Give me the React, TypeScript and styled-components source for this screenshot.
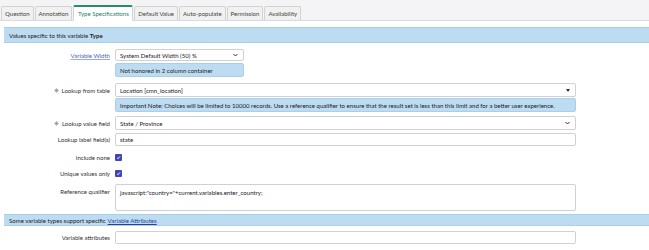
import React from "react";
import styled, { createGlobalStyle } from "styled-components";

const Global = createGlobalStyle`
  html, body { margin: 0; padding: 0; background: #fff; }
  body { font-family: Lato, "Open Sans", sans-serif; color: #2e2e2e; }
  * { box-sizing: border-box; }
`;

const Page = styled.div`
  width: 649px;
  height: 250px;
  overflow: hidden;
  font-size: 6.05px;
`;

const TabStrip = styled.div`
  display: flex;
  align-items: flex-end;
  height: 21px;
  padding: 0 0 0 1px;
  background: #f4f4f6;
  border-bottom: 1px solid #dadadd;
`;

const Tab = styled.div<{ $active?: boolean }>`
  height: ${(p) => (p.$active ? "16px" : "15px")};
  margin-bottom: -1px;
  padding: 0 ${(p) => (p.$active ? "3.5px" : "3px")};
  display: flex;
  align-items: center;
  background: ${(p) => (p.$active ? "#fff" : "#f1f1f2")};
  border: 1px solid #d3d3d6;
  border-top: ${(p) => (p.$active ? "2px solid #2a8a6c" : "1px solid #d3d3d6")};
  border-bottom: ${(p) => (p.$active ? "1px solid #fff" : "1px solid #dadadd")};
  border-radius: 2px 2px 0 0;
  margin-right: 1px;
  color: ${(p) => (p.$active ? "#2a7f69" : "#444")};
  white-space: nowrap;
`;

const Content = styled.div`
  padding: 6px 0 0 4px;
`;

const Banner = styled.div<{ $h: number; $mt?: number }>`
  height: ${(p) => p.$h}px;
  margin-top: ${(p) => p.$mt ?? 0}px;
  display: flex;
  align-items: center;
  padding-left: 5px;
  background: #bddcf1;
  border-top: 1px solid #aacfe8;
  border-bottom: 1px solid #aacfe8;
  color: #222;
  white-space: nowrap;
`;

const Row = styled.div<{ $mt: number }>`
  display: flex;
  align-items: flex-start;
  margin-top: ${(p) => p.$mt}px;
`;

const Label = styled.div<{ $h: number }>`
  width: 111px;
  flex: none;
  height: ${(p) => p.$h}px;
  padding-right: 5px;
  display: flex;
  align-items: center;
  justify-content: flex-end;
  gap: 3px;
  color: #333;
  white-space: nowrap;
`;

const LinkText = styled.span`
  color: #4a63cc;
  text-decoration: underline;
  text-decoration-color: #9aa9e4;
`;

const DarkLink = styled.span`
  color: #2a3f9e;
  text-decoration: underline;
  margin-left: 2px;
`;

const FieldCol = styled.div<{ $w: number }>`
  width: ${(p) => p.$w}px;
  display: flex;
  flex-direction: column;
`;

const Control = styled.div<{ $h: number; $top?: boolean }>`
  height: ${(p) => p.$h}px;
  display: flex;
  align-items: ${(p) => (p.$top ? "flex-start" : "center")};
  justify-content: space-between;
  padding: ${(p) => (p.$top ? "4px 5px 0 4px" : "0 5px 0 4px")};
  border: 1px solid #d0d0d6;
  border-radius: 2px;
  background: #fff;
  color: #222;
  white-space: nowrap;
`;

const Hint = styled.div<{ $mt: number }>`
  height: 14px;
  margin-top: ${(p) => p.$mt}px;
  display: flex;
  align-items: center;
  padding-left: 4px;
  background: #bddcf1;
  border: 1px solid #a9cfe9;
  border-radius: 2px;
  color: #222;
  white-space: nowrap;
`;

const Check = styled.div`
  width: 7px;
  height: 7px;
  margin-top: 3px;
  border-radius: 1px;
  background: #4046b8;
  display: flex;
  align-items: center;
  justify-content: center;
`;

const Star = () => (
  <svg width="5" height="5" viewBox="0 0 10 10" stroke="#8a8a8a" strokeWidth="1.3">
    <line x1="5" y1="0.5" x2="5" y2="9.5" />
    <line x1="0.5" y1="5" x2="9.5" y2="5" />
    <line x1="1.8" y1="1.8" x2="8.2" y2="8.2" />
    <line x1="8.2" y1="1.8" x2="1.8" y2="8.2" />
  </svg>
);

const Chevron = () => (
  <svg width="5" height="4" viewBox="0 0 10 8" fill="none" stroke="#333" strokeWidth="2">
    <polyline points="1,2 5,6 9,2" />
  </svg>
);

const Triangle = () => (
  <svg width="4" height="3" viewBox="0 0 8 6" fill="#333">
    <polygon points="0,0 8,0 4,6" />
  </svg>
);

const Tick = () => (
  <svg width="5" height="5" viewBox="0 0 10 10" fill="none" stroke="#fff" strokeWidth="1.6">
    <polyline points="2,5.5 4.2,7.6 8.2,2.6" />
  </svg>
);

const tabs = [
  "Question",
  "Annotation",
  "Type Specifications",
  "Default Value",
  "Auto-populate",
  "Permission",
  "Availability",
];

export default function App() {
  return (
    <Page>
      <Global />
      <TabStrip>
        {tabs.map((t) => (
          <Tab key={t} $active={t === "Type Specifications"}>
            {t}
          </Tab>
        ))}
      </TabStrip>
      <Content>
        <Banner $h={16}>
          Values specific to this variable&nbsp;<b>Type</b>
        </Banner>

        <Row $mt={6}>
          <Label $h={12}>
            <LinkText>Variable Width</LinkText>
          </Label>
          <FieldCol $w={129}>
            <Control $h={12}>
              System Default Width (50) %
              <Chevron />
            </Control>
            <Hint $mt={2}>Not honored in 2 column container</Hint>
          </FieldCol>
        </Row>

        <Row $mt={6}>
          <Label $h={14}>
            <Star />
            Lookup from table
          </Label>
          <FieldCol $w={461}>
            <Control $h={14}>
              Location [cmn_location]
              <Triangle />
            </Control>
            <Hint $mt={1}>
              Important Note: Choices will be limited to 10000 records. Use a reference
              qualifier to ensure that the result set is less than this limit and for a
              better user experience.
            </Hint>
          </FieldCol>
        </Row>

        <Row $mt={4}>
          <Label $h={14}>
            <Star />
            Lookup value field
          </Label>
          <FieldCol $w={461}>
            <Control $h={14}>
              State / Province
              <Chevron />
            </Control>
          </FieldCol>
        </Row>

        <Row $mt={3}>
          <Label $h={13}>Lookup label field(s)</Label>
          <FieldCol $w={461}>
            <Control $h={13}>state</Control>
          </FieldCol>
        </Row>

        <Row $mt={5}>
          <Label $h={13}>Include none</Label>
          <Check>
            <Tick />
          </Check>
        </Row>

        <Row $mt={3}>
          <Label $h={13}>Unique values only</Label>
          <Check>
            <Tick />
          </Check>
        </Row>

        <Row $mt={4}>
          <Label $h={14}>Reference qualifier</Label>
          <FieldCol $w={461}>
            <Control $h={27} $top>
              javascript:"country="+current.variables.enter_country;
            </Control>
          </FieldCol>
        </Row>

        <Banner $h={12} $mt={3}>
          Some variable types support specific
          <DarkLink>Variable Attributes</DarkLink>
        </Banner>

        <Row $mt={5}>
          <Label $h={13}>Variable attributes</Label>
          <FieldCol $w={461}>
            <Control $h={13} />
          </FieldCol>
        </Row>
      </Content>
    </Page>
  );
}
